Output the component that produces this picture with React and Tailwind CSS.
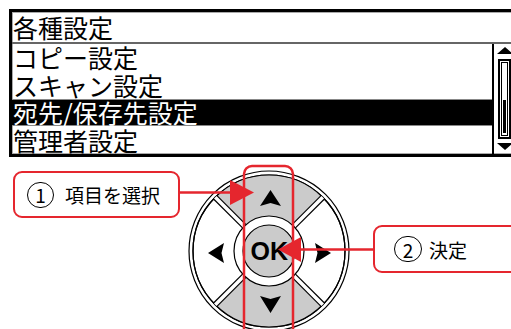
export default function App() {
  const rows = ["コピー設定", "スキャン設定", "宛先/保存先設定", "管理者設定"];
  const red = "#e5262e";
  return (
    <div className="w-[511px] h-[329px] overflow-hidden bg-white flex flex-col font-['Noto_Sans_CJK_JP',sans-serif] text-black">
      {/* LCD */}
      <div className="ml-[9px] mt-[9px] w-[508px] h-[148px] shrink-0 border-[3px] border-black flex flex-col bg-white shadow-[inset_0_0_0_1px_#aaa]">
        <div className="h-[30px] shrink-0 flex items-center text-[25px] leading-[30px] pl-[1px]">各種設定</div>
        <div className="h-[2px] shrink-0 bg-[#666]"></div>
        <div className="flex-1 flex">
          <div className="flex-1 flex flex-col">
            <div className="h-[27px] flex items-center text-[25px] leading-[27px] pl-[1px]">{rows[0]}</div>
            <div className="h-[28px] flex items-center text-[25px] leading-[28px] pl-[1px]">{rows[1]}</div>
            <div className="h-[27px] flex items-center text-[25px] leading-[25px] pl-[1px] bg-black text-white border-y border-[#888]">{rows[2]}</div>
            <div className="h-[28px] flex items-center text-[25px] leading-[28px] pl-[1px]">{rows[3]}</div>
          </div>
          <div className="w-[22px] shrink-0 border-l-2 border-black flex flex-col items-center pl-[1px]">
            <svg width="16" height="7" viewBox="0 0 16 7" className="mt-[3px]">
              <path d="M8 0 L16 7 L0 7 Z" fill="black" />
            </svg>
            <div className="mt-[5px] w-[13px] h-[80px] border-2 border-black p-[1px] flex">
              <div className="flex-1 border border-black flex flex-col justify-end px-[1px] pb-[2px]">
                <div className="h-[33px] bg-black"></div>
              </div>
            </div>
            <svg width="16" height="7" viewBox="0 0 16 7" className="mt-[4px]">
              <path d="M0 0 L16 0 L8 7 Z" fill="black" />
            </svg>
          </div>
        </div>
      </div>

      {/* Diagram */}
      <div className="relative flex-1">
        <svg className="absolute inset-0" width="511" height="172" viewBox="0 157 511 172">
          <circle cx="269" cy="251" r="80" fill="white" stroke="black" strokeWidth="1.2" />
          <circle cx="269" cy="251" r="76" fill="white" stroke="black" strokeWidth="1.2" />
          <path d="M215.26 197.26 A76 76 0 0 1 322.74 197.26 L293.75 226.25 A35 35 0 0 0 244.25 226.25 Z" fill="#cbcbcb" />
          <path d="M322.74 304.74 A76 76 0 0 1 215.26 304.74 L244.25 275.75 A35 35 0 0 0 293.75 275.75 Z" fill="#cbcbcb" />
          <circle cx="269" cy="251" r="76" fill="none" stroke="black" strokeWidth="1.2" />
          {[
            [244.25, 226.25, 215.26, 197.26],
            [293.75, 226.25, 322.74, 197.26],
            [244.25, 275.75, 215.26, 304.74],
            [293.75, 275.75, 322.74, 304.74],
          ].map(([x1, y1, x2, y2], i) => (
            <g key={i}>
              <line x1={x1} y1={y1} x2={x2} y2={y2} stroke="black" strokeWidth="6" />
              <line x1={x1} y1={y1} x2={x2} y2={y2} stroke="white" strokeWidth="3.6" />
            </g>
          ))}
          <circle cx="269" cy="251" r="35" fill="white" stroke="black" strokeWidth="1.2" />
          <circle cx="269" cy="251" r="26" fill="#cbcbcb" stroke="black" strokeWidth="1.2" />
          <text x="250.5" y="260" fontFamily="Liberation Sans, Arial, sans-serif" fontWeight="bold" fontSize="25" fill="black">OK</text>
          {/* direction arrows */}
          <path d="M270.5 190 L281 206 L270.5 203 L260 206 Z" fill="black" />
          <path d="M260 296 L270.5 299 L281 296 L270.5 313 Z" fill="black" />
          <path d="M208 253 L224 243 L221.5 253 L224 263 Z" fill="black" />
          <path d="M331 253 L315 243 L317.5 253 L315 263 Z" fill="black" />
          {/* red highlight */}
          <rect x="244" y="166" width="49" height="200" rx="8" fill="none" stroke={red} strokeWidth="2.5" />
          <line x1="180" y1="192.5" x2="234" y2="192.5" stroke={red} strokeWidth="2.5" />
          <path d="M230 180 L254 192.5 L230 205 Z" fill={red} />
          <line x1="296" y1="249.5" x2="374" y2="249.5" stroke={red} strokeWidth="2.5" />
          <path d="M278 249.5 L301 237 L301 262 Z" fill={red} />
        </svg>

        <div className="absolute left-[13px] top-[14px] w-[167px] h-[47px] border-[2.5px] border-[#e5262e] rounded-[9px] bg-white flex items-center pl-[12px]">
          <span className="w-[27px] h-[26px] rounded-full border-[1.5px] border-black flex items-center justify-center text-[19px] leading-none">1</span>
          <span className="ml-[11px] text-[19px] leading-none">項目を選択</span>
        </div>

        <div className="absolute left-[373px] top-[68px] w-[160px] h-[48px] border-[2.5px] border-[#e5262e] rounded-[9px] bg-white flex items-center pl-[19px]">
          <span className="w-[28px] h-[26px] rounded-full border-[1.5px] border-black flex items-center justify-center text-[19px] leading-none">2</span>
          <span className="ml-[7px] text-[19px] leading-none">決定</span>
        </div>
      </div>
    </div>
  );
}
